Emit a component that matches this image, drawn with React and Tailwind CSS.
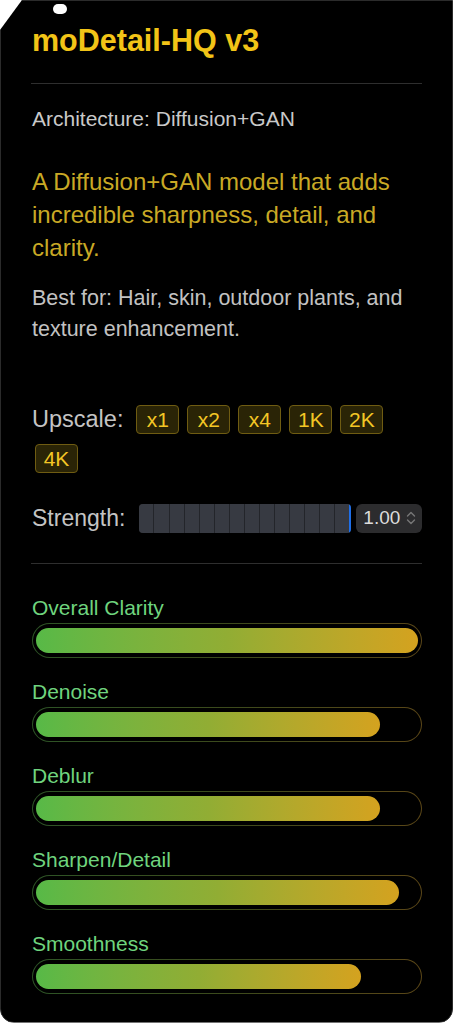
import React from "react";

const upscales = ["x1", "x2", "x4", "1K", "2K", "4K"];

const metrics = [
  { name: "Overall Clarity", value: 1 },
  { name: "Denoise", value: 0.9 },
  { name: "Deblur", value: 0.9 },
  { name: "Sharpen/Detail", value: 0.95 },
  { name: "Smoothness", value: 0.85 },
];

function MetricBar({ name, value }) {
  return (
    <div className="mt-[21px] first:mt-0">
      <div className="text-[21px] leading-[26px] text-[#6fd47e]">{name}</div>
      <div className="mt-[2px] rounded-full p-px bg-gradient-to-r from-[#2d5426] via-[#3c4a1c] to-[#5a4617]">
        <div className="rounded-full bg-black px-[3px] py-[4px] h-[33px]">
          <div
            className="h-full rounded-full bg-gradient-to-r from-[#57b947] via-[#91ad34] to-[#d4a21f]"
            style={{ width: `${value * 100}%` }}
          />
        </div>
      </div>
    </div>
  );
}

export default function App() {
  return (
    <div className="min-h-screen bg-white font-['Liberation_Sans',Arial,sans-serif]">
      <div className="relative bg-black border border-[#2b2b2b] rounded-b-[14px] px-[30px] pt-[21px] pb-[28px] [clip-path:polygon(22px_0,100%_0,100%_100%,0_100%,0_30px)]">
        {/* title */}
        <h1 className="text-[30.5px] leading-[36px] font-bold text-[#f2c417] pl-[1px]">
          moDetail-HQ v3
        </h1>
        <div className="mt-[25px] h-px bg-[#2e2e2e]" />

        <p className="mt-[21px] text-[21px] leading-[28px] text-[#c9c9c9] pl-px">
          Architecture: Diffusion+GAN
        </p>

        <p className="mt-[32px] text-[24px] leading-[33px] text-[#c9a925] pl-px">
          A Diffusion+GAN model that adds incredible sharpness, detail, and clarity.
        </p>

        <p className="mt-[19px] text-[21.5px] leading-[31px] text-[#c2c2c2] pl-px">
          Best for: Hair, skin, outdoor plants, and texture enhancement.
        </p>

        {/* upscale */}
        <div className="mt-[55px] flex flex-wrap items-center">
          <span className="mr-[9px] text-[23.5px] leading-[39px] text-[#c4c4c4] pl-px">Upscale:</span>
          {upscales.map((u) => (
            <button
              key={u}
              className="mx-[4px] my-[5px] w-[43px] h-[29px] flex items-center justify-center rounded-[4px] border border-[#6f5c12] bg-[#2a2406] text-[21px] text-[#f3c625]"
            >
              {u}
            </button>
          ))}
        </div>

        {/* strength */}
        <div className="mt-[23px] flex items-center">
          <span className="text-[23px] text-[#c4c4c4] pl-px">Strength:</span>
          <div className="ml-[14px] flex h-[29px] w-[212px] overflow-hidden rounded-[4px] bg-[#23252a]">
            {Array.from({ length: 14 }).map((_, i) => (
              <div key={i} className="flex-1 ml-px first:ml-0 bg-[#373a42]" />
            ))}
            <div className="w-[2px] bg-[#1f6fe8]" />
          </div>
          <div className="ml-[5px] flex h-[29px] flex-1 items-center justify-between rounded-[6px] bg-[#2c2c2e] pl-[7px] pr-[6px]">
            <span className="text-[19px] text-[#dcdcdc]">1.00</span>
            <svg width="10" height="16" viewBox="0 0 10 16" fill="none" stroke="#777" strokeWidth="1.4" strokeLinecap="round" strokeLinejoin="round">
              <path d="M1.5 6 L5 2.5 L8.5 6" />
              <path d="M1.5 10 L5 13.5 L8.5 10" />
            </svg>
          </div>
        </div>

        <div className="mt-[27px] h-px bg-[#2e2e2e]" />

        {/* metrics */}
        <div className="mt-[31px] pl-px">
          {metrics.map((m) => (
            <MetricBar key={m.name} {...m} />
          ))}
        </div>

        {/* overlay blob */}
        <div className="absolute left-[52px] top-[3px] h-[10px] w-[14px] rounded-full bg-white" />
      </div>
    </div>
  );
}
